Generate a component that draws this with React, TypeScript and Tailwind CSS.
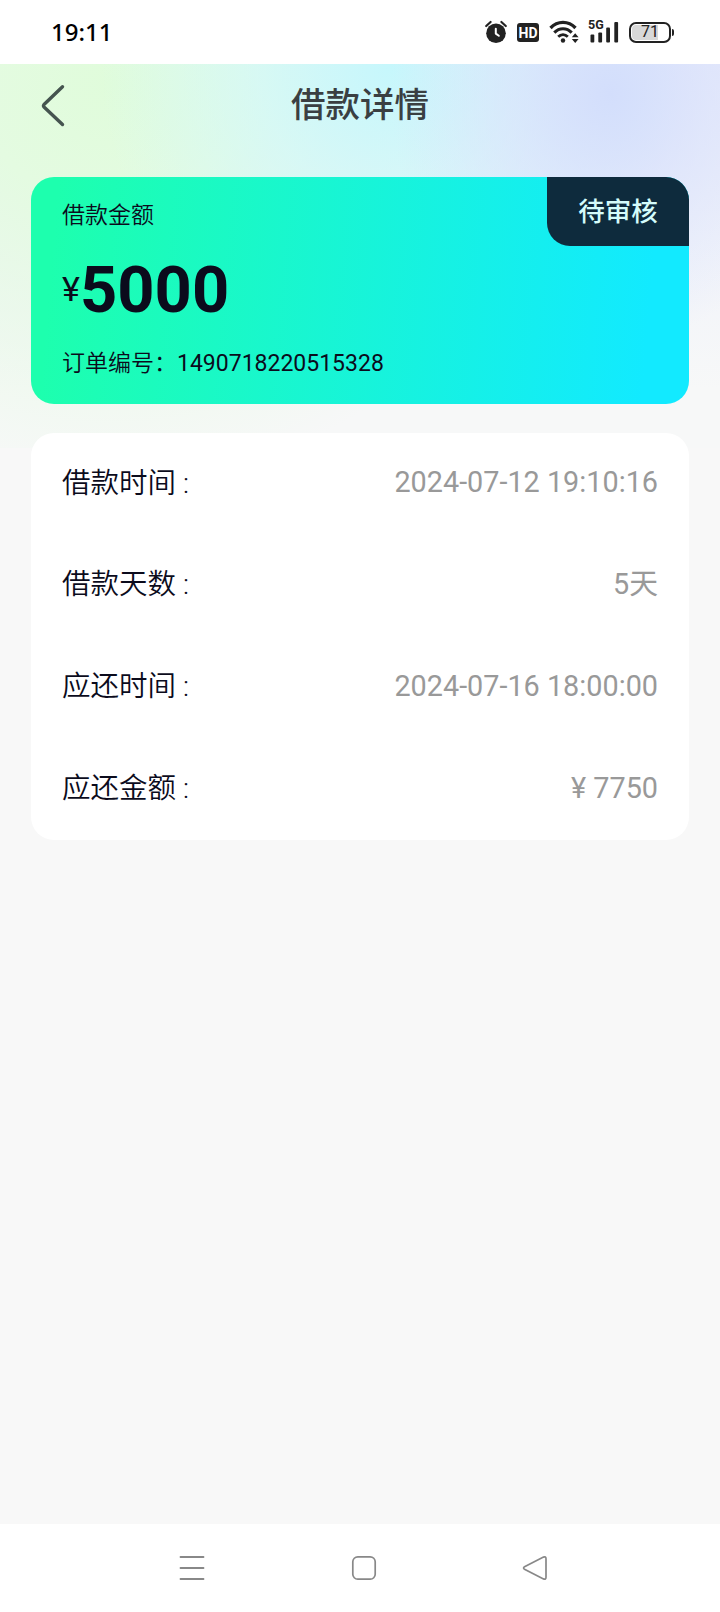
import type { ReactNode } from 'react';

const rows = [
    { label: '借款时间', value: '2024-07-12 19:10:16' },
    { label: '借款天数', value: '5天' },
    { label: '应还时间', value: '2024-07-16 18:00:00' },
    { label: '应还金额', value: '¥ 7750' },
];

function AlarmIcon() {
    return (
        <svg className="w-6 h-6" viewBox="0 0 24 24" fill="none">
            <circle cx="12" cy="13.2" r="9.8" fill="#222" />
            <path d="M2.2 6 6.6 2M21.8 6 17.4 2" stroke="#222" strokeWidth="2.2" strokeLinecap="round" />
            <path d="M11.8 8.8v4.8l3 2.2" stroke="#fff" strokeWidth="2" strokeLinecap="round" strokeLinejoin="round" />
        </svg>
    );
}

function WifiIcon() {
    return (
        <svg className="w-[30px] h-6" viewBox="0 0 30 24" fill="none">
            <path d="M1.500 8C8.500 .6 19.500 .6 26.500 8" stroke="#222" strokeWidth="3.300" />
            <path d="M5.300 12.600C10.300 7.400 17.700 7.400 22.700 12.600" stroke="#222" strokeWidth="3.100" />
            <path d="M9.200 16.800C12 14 16 14 18.800 16.800" stroke="#222" strokeWidth="2.800" />
            <circle cx="14" cy="20.500" r="2.200" fill="#222" />
            <path d="M26.200 13.300 29.600 17.300h-6.800zM26.200 23 22.800 19h6.800z" fill="#222" />
        </svg>
    );
}

function SignalIcon() {
    return (
        <svg className="w-[31px] h-6" viewBox="0 0 31 24" fill="#222">
            <rect x="2.500" y="14.500" width="3.800" height="8" rx="1" />
            <rect x="10.300" y="12.500" width="3.800" height="10" rx="1" />
            <rect x="18.200" y="7.500" width="3.800" height="15" rx="1" />
            <rect x="26.300" y="2" width="3.800" height="20.500" rx="1" />
        </svg>
    );
}

function StatusBar() {
    return (
        <div className="h-16 shrink-0 bg-white flex items-center justify-between pl-[51px] pr-[46px]">
            <span className="font-['Noto_Sans',sans-serif] font-medium text-[24px] leading-none text-black">19:11</span>
            <div className="flex items-center h-6">
                <AlarmIcon />
                <div className="ml-[9px] mt-px w-[22px] h-[19px] rounded-[3px] bg-[#222] text-white flex items-center justify-center font-[Roboto,sans-serif] font-bold text-[14px] leading-none">
                    HD
                </div>
                <div className="ml-[10px] flex">
                    <WifiIcon />
                </div>
                <div className="ml-[9px] relative flex">
                    <SignalIcon />
                    <span className="absolute left-0 -top-px font-[Roboto,sans-serif] font-bold text-[12.500px] leading-none text-[#222]">5G</span>
                </div>
                <div className="ml-[10px] relative w-[42px] h-[21px] rounded-[7px] border-2 border-[#222] p-px">
                    <div className="w-[26px] h-full rounded-l-[4px] bg-[#d8d8d8]" />
                    <span className="absolute inset-0 flex items-center justify-center font-[Roboto,sans-serif] text-[16px] leading-none text-[#222]">71</span>
                </div>
                <div className="ml-px w-[2px] h-[7px] rounded-r bg-[#222]" />
            </div>
        </div>
    );
}

function Header() {
    return (
        <div className="h-[113px] relative flex justify-center pt-[15px]">
            <svg className="absolute left-[40px] top-[20px] w-7 h-[44px]" viewBox="0 0 28 44" fill="none">
                <path d="M22.500 2.800 4 20.500Q3 21.700 4 22.900L22.500 40.500" stroke="#45544f" strokeWidth="3.400" strokeLinecap="round" strokeLinejoin="round" />
            </svg>
            <h1 className="text-[34.500px] leading-[52px] font-medium text-[#3a3f42]">借款详情</h1>
        </div>
    );
}

function AmountCard() {
    return (
        <div className="relative h-[227px] rounded-[23px] overflow-hidden bg-[linear-gradient(95deg,#1dffae_4%,#12eaff_93%)] px-[31px] text-[#0b0b1c]">
            <div className="pt-[22px] text-[23px] leading-[34px] font-[350]">借款金额</div>
            <div className="mt-[19px] flex items-center h-[76px]">
                <span className="text-[34px] leading-none w-[18px] -mt-[3px]">¥</span>
                <span className="text-[65px] leading-none font-bold">5000</span>
            </div>
            <div className="mt-[19px] text-[23px] leading-[34px] flex">
                <span className="font-[350]">订单编号：</span>
                <span>1490718220515328</span>
            </div>
            <div className="absolute right-0 top-0 w-[142px] h-[69px] rounded-bl-[23px] bg-[#0e2b3d] text-[#d4fcfb] text-[26.500px] font-medium flex items-center justify-center pt-px">
                待审核
            </div>
        </div>
    );
}

function Row({ label, children }: { label: string; children: ReactNode }) {
    return (
        <div className="flex-1 flex items-center justify-between px-[31px] pb-[2px] text-[28.500px]">
            <span className="text-[#0b0b1c] font-[350] pt-[2px]">{label} :</span>
            <span className="text-[28.800px] text-[#999]">{children}</span>
        </div>
    );
}

function NavBar() {
    return (
        <div className="h-[88px] shrink-0 bg-white flex items-center pl-[179px]">
            <svg className="w-[26px] h-[26px]" viewBox="0 0 26 26" stroke="#888" strokeWidth="1.800" strokeLinecap="round">
                <path d="M1.500 2h23M1.500 13h23M1.500 24h23" />
            </svg>
            <svg className="ml-[146px] w-[26px] h-[26px]" viewBox="0 0 26 26" fill="none" stroke="#888" strokeWidth="1.700">
                <rect x="1.800" y="1.800" width="22.400" height="22.400" rx="5" />
            </svg>
            <svg className="ml-[145px] w-[26px] h-[26px]" viewBox="0 0 26 26" fill="none" stroke="#888" strokeWidth="1.700">
                <path d="M2.500 11.800 21.500 2.100Q24 1.200 24 3.700v18.600Q24 24.800 21.500 23.900L2.500 14.200Q.6 13 2.500 11.800z" />
            </svg>
        </div>
    );
}

export default function App() {
    return (
        <div className="w-[720px] h-[1612px] flex flex-col bg-[#f8f8f8] font-[Roboto,'Noto_Sans_CJK_SC',sans-serif]">
            <StatusBar />
            <main className="flex-1 bg-no-repeat bg-[length:720px_384px] bg-[radial-gradient(ellipse_220px_250px_at_610px_30px,#d3defc_0%,#d8e1fc99_45%,#e8eafa00_100%),radial-gradient(ellipse_290px_300px_at_390px_0px,#c6f7fc_0%,#d0f8fcaa_45%,#e2f9fb00_100%),radial-gradient(ellipse_440px_400px_at_110px_20px,#e0fcdb_0%,#e4fbe1_30%,#f3f9f200_100%),linear-gradient(180deg,#e9ebfa_0%,#f1f3fa_45%,#f7f8f8_85%)]">
                <Header />
                <div className="px-[31px]">
                    <AmountCard />
                    <div className="mt-[29px] h-[407px] rounded-[23px] bg-white flex flex-col">
                        {rows.map((row) => (
                            <Row key={row.label} label={row.label}>
                                {row.value}
                            </Row>
                        ))}
                    </div>
                </div>
            </main>
            <NavBar />
        </div>
    );
}
